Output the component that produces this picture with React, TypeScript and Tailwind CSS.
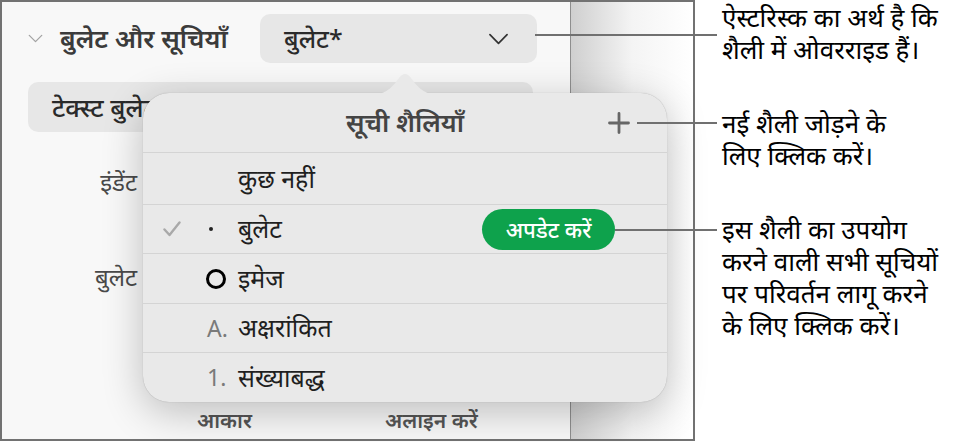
import React from "react";

const font = { fontFamily: '"Noto Sans", "Noto Sans Devanagari", "Lohit Devanagari", sans-serif' };

function ChevronDown({ className }: { className?: string }) {
  return (
    <svg viewBox="0 0 24 14" className={className} fill="none" stroke="currentColor" strokeWidth={2} strokeLinecap="round" strokeLinejoin="round">
      <path d="M2 2 L12 12 L22 2" />
    </svg>
  );
}

type Row = { h: string; marker: React.ReactNode; label: string; checked?: boolean; action?: boolean };

const rows: Row[] = [
  { h: "h-[52px]", marker: null, label: "कुछ नहीं" },
  { h: "h-[49px]", marker: <span className="block w-[4px] h-[4px] rounded-full bg-[#222] ml-[2px]" />, label: "बुलेट", checked: true, action: true },
  { h: "h-[50px]", marker: <span className="block w-[20px] h-[20px] -ml-[1px] rounded-full border-[3px] border-black" />, label: "इमेज" },
  { h: "h-[49px]", marker: <span className="text-[23px] text-[#7a7a7a]">A.</span>, label: "अक्षरांकित" },
  { h: "h-[50px]", marker: <span className="text-[23px] text-[#7a7a7a]">1.</span>, label: "संख्याबद्ध" },
];

function ListStylesPopover() {
  return (
    <div className="absolute left-[141px] top-[91px] w-[524px] h-[309px] z-10">
      <svg viewBox="0 0 60 24" className="absolute left-[232px] top-[-23px] w-[60px] h-[24px]">
        <path d="M0 24 C 12 24 18 16 24 8 Q 30 0 36 8 C 42 16 48 24 60 24 Z" fill="#e9e9e9" />
      </svg>
      <div className="w-full h-full rounded-[26px] bg-[#e9e9e9] shadow-[0_10px_40px_rgba(0,0,0,0.24),0_0_1px_rgba(0,0,0,0.3)] overflow-hidden flex flex-col">
        <div className="relative h-[59px] flex items-center justify-center">
          <span className="text-[26px] font-semibold text-[#444]">सूची शैलियाँ</span>
          <svg viewBox="0 0 22 22" className="absolute right-[37px] top-[19px] w-[22px] h-[22px]" stroke="#666" strokeWidth={2.8} strokeLinecap="round">
            <path d="M11 1.5 V20.5 M1.5 11 H20.5" />
          </svg>
        </div>
        {rows.map((r, i) => (
          <div key={i} className={`${r.h} border-t-[1.5px] border-[#d4d4d4] flex items-center pl-[20px] pr-[52px]`}>
            <div className="w-[44px] flex items-center">
              {r.checked && (
                <svg viewBox="0 0 18 16" className="w-[18px] h-[16px]" fill="none" stroke="#a9a9a9" strokeWidth={2.4} strokeLinecap="round" strokeLinejoin="round">
                  <path d="M1.5 8.5 L6.5 14 L16.5 1.5" />
                </svg>
              )}
            </div>
            <div className="w-[31px] flex items-center">{r.marker}</div>
            <span className="text-[25px] text-[#1f1f1f]">{r.label}</span>
            {r.action && (
              <span className="ml-auto h-[41px] w-[133px] rounded-full bg-[#0ea24c] text-white text-[22px] font-medium flex items-center justify-center">
                अपडेट करें
              </span>
            )}
          </div>
        ))}
      </div>
    </div>
  );
}

export default function App() {
  return (
    <div className="relative w-[960px] h-[442px] bg-white flex" style={font}>
      {/* sidebar window */}
      <div className="relative w-[695px] h-[441px] border-2 border-[#727272] flex shrink-0">
        <div className="w-[569px] h-full bg-[#f8f8f8] border-r-[1.5px] border-[#8e8e8e] flex flex-col">
          <div className="flex items-center h-[49px] mt-[12px] pl-[26px] pr-[33px]">
            <ChevronDown className="w-[15px] h-[9px] text-[#a3a3a3]" />
            <span className="ml-[17px] text-[26px] font-semibold text-[#3b3b3b] flex-1 whitespace-nowrap">बुलेट और सूचियाँ</span>
            <div className="w-[277px] h-[49px] rounded-[10px] bg-[#e7e7e7] flex items-center pl-[24px] pr-[27px] shrink-0">
              <span className="text-[25px] font-medium text-[#2a2a2a] flex-1">बुलेट*</span>
              <ChevronDown className="w-[23px] h-[12px] text-[#333]" />
            </div>
          </div>
          <div className="mt-[19px] ml-[26px] w-[505px] h-[50px] rounded-[10px] bg-[#e7e7e7] flex items-center pl-[24px]">
            <span className="text-[26px] font-medium text-[#2a2a2a] whitespace-nowrap">टेक्स्ट बुलेट</span>
          </div>
          <div className="mt-[34px] w-[135px] text-right text-[24px] leading-[32px] text-[#4a4a4a]">इंडेंट</div>
          <div className="mt-[63px] w-[135px] text-right text-[24px] leading-[32px] text-[#4a4a4a]">बुलेट</div>
          <div className="mt-auto mb-[6px] flex pl-[195px] text-[21px] leading-[26px] font-semibold text-[#555]">
            <span className="w-[188px]">आकार</span>
            <span>अलाइन करें</span>
          </div>
        </div>
        <div className="flex-1 h-full bg-gradient-to-r from-[#cfcfcf] via-[#f4f4f4] to-white" />
        <ListStylesPopover />
      </div>

      {/* callout text */}
      <div className="ml-[27px] pt-[1px] flex flex-col gap-[42px] text-[26px] leading-[32px] text-black whitespace-nowrap">
        <p>ऐस्टरिस्क का अर्थ है कि<br />शैली में ओवरराइड हैं।</p>
        <p>नई शैली जोड़ने के<br />लिए क्लिक करें।</p>
        <p>इस शैली का उपयोग<br />करने वाली सभी सूचियों<br />पर परिवर्तन लागू करने<br />के लिए क्लिक करें।</p>
      </div>

      {/* callout leader lines */}
      <div className="absolute left-[535px] top-[34px] w-[182px] h-[2px] bg-[#707070] z-20" />
      <div className="absolute left-[637px] top-[122px] w-[80px] h-[2px] bg-[#707070] z-20" />
      <div className="absolute left-[615px] top-[229px] w-[102px] h-[2px] bg-[#707070] z-20" />
    </div>
  );
}
